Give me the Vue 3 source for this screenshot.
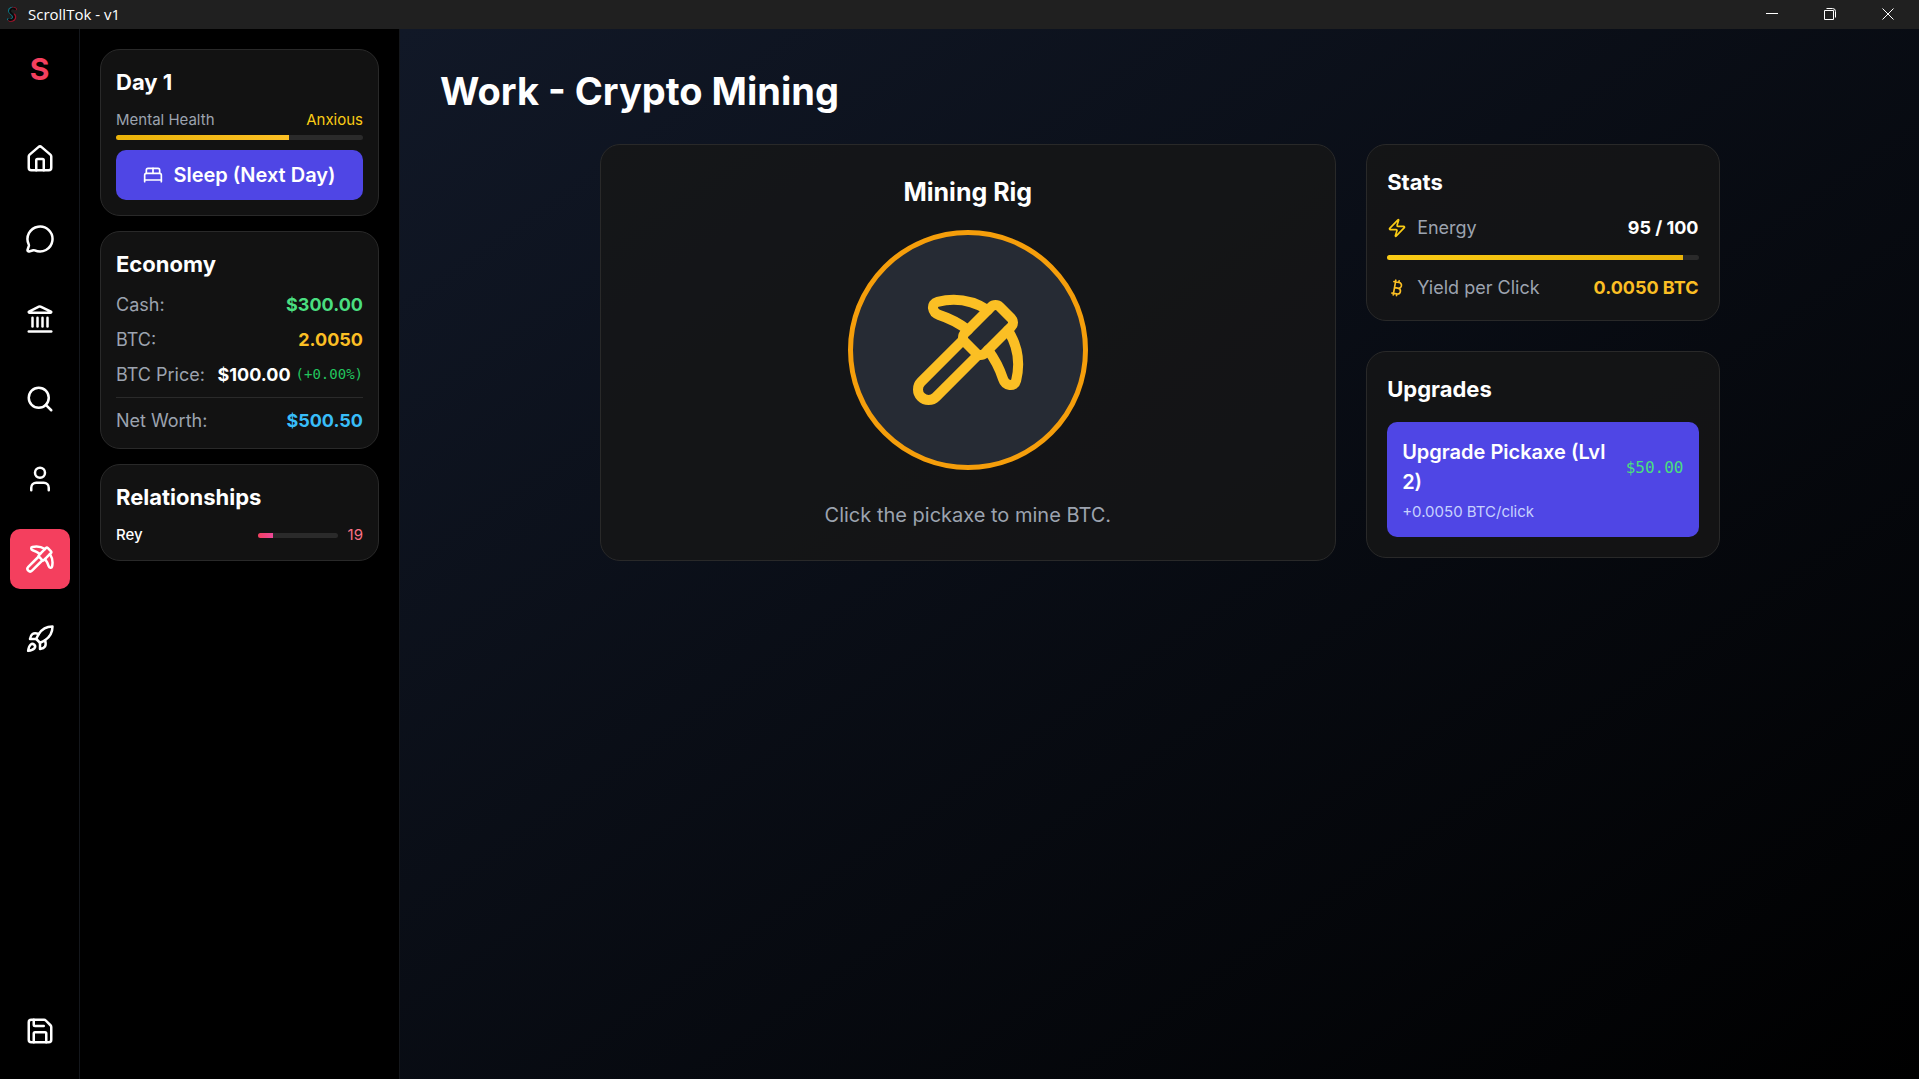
<template>
    <div class="window">
        <header class="titlebar">
            <svg class="titlebar__logo" viewBox="0 0 16 16" fill="none" stroke-width="2" stroke-linecap="round">
                <path stroke="#0e7c8c" d="M10.500 2.500C8 .8 4.800 2.500 5 5c.2 2.500 4 3 4 6 0 2.500-3 3.500-5 2.300" />
                <path stroke="#a3122a" d="M12 3.300c-.5-1-2-1.500-3.500-1M10.500 8.500c2 2.500 .5 6-2.500 6.300-1.500.1-2.500-.2-3-.6" />
                <path stroke="#0a0a0a" d="M11.200 3.200C9 1.600 6 2.700 6 5.200c0 2.300 4 3 4 5.800 0 2.500-2.800 3.600-5 2.500" />
            </svg>
            <span class="titlebar__text">ScrollTok - v1</span>
            <div class="titlebar__controls">
                <button v-for="control in windowControls" :key="control.name" :aria-label="control.name"
                    class="titlebar__button" type="button">
                    <svg viewBox="0 0 12 12" fill="none" stroke="currentColor">
                        <path v-for="d in control.paths" :key="d" :d="d" />
                    </svg>
                </button>
            </div>
        </header>

        <div class="layout">
            <nav class="nav">
                <div class="nav__logo">S</div>
                <button v-for="item in navItems" :key="item.name" @click="currentPage = item.name"
                    :class="{ 'nav__button_active': item.name === currentPage }" :aria-label="item.name"
                    class="nav__button" type="button">
                    <svg class="icon nav__icon" viewBox="0 0 24 24">
                        <path v-for="d in icons[item.icon]" :key="d" :d="d" />
                    </svg>
                </button>
                <button class="nav__button nav__button_bottom" type="button" aria-label="save">
                    <svg class="icon nav__icon" viewBox="0 0 24 24">
                        <path v-for="d in icons.save" :key="d" :d="d" />
                    </svg>
                </button>
            </nav>

            <aside class="sidebar">
                <section class="card card_small">
                    <h2 class="card__title">Day {{ day }}</h2>
                    <div class="row row_small">
                        <span class="label">Mental Health</span>
                        <span class="mood">Anxious</span>
                    </div>
                    <div class="bar bar_mental">
                        <div class="bar__fill bar__fill_mental" :style="{ width: mental + '%' }"></div>
                    </div>
                    <button @click="sleep()" class="sleep" type="button">
                        <svg class="icon sleep__icon" viewBox="0 0 24 24">
                            <path v-for="d in icons.bed" :key="d" :d="d" />
                        </svg>
                        Sleep (Next Day)
                    </button>
                </section>

                <section class="card card_small">
                    <h2 class="card__title">Economy</h2>
                    <div class="economy">
                        <div class="row">
                            <span class="label">Cash:</span>
                            <span class="value value_green">${{ cash.toFixed(2) }}</span>
                        </div>
                        <div class="row">
                            <span class="label">BTC:</span>
                            <span class="value value_amber">{{ btc.toFixed(4) }}</span>
                        </div>
                        <div class="row">
                            <span class="label">BTC Price:</span>
                            <span class="price">
                                <span class="value">${{ btcPrice.toFixed(2) }}</span>
                                <span class="price__change">(+0.00%)</span>
                            </span>
                        </div>
                        <div class="row row_total">
                            <span class="label">Net Worth:</span>
                            <span class="value value_blue">${{ netWorth.toFixed(2) }}</span>
                        </div>
                    </div>
                </section>

                <section class="card card_small">
                    <h2 class="card__title">Relationships</h2>
                    <div v-for="person in people" :key="person.name" class="row row_small">
                        <span class="person__name">{{ person.name }}</span>
                        <span class="person__level">
                            <span class="bar bar_person">
                                <span class="bar__fill bar__fill_person" :style="{ width: person.level + '%' }"></span>
                            </span>
                            {{ person.level }}
                        </span>
                    </div>
                </section>
            </aside>

            <main class="main">
                <h1 class="main__title">Work - Crypto Mining</h1>

                <div class="work">
                    <section class="card rig">
                        <h2 class="rig__title">Mining Rig</h2>
                        <button @click="mine()" class="rig__button" type="button" aria-label="mine">
                            <svg class="icon rig__icon" viewBox="0 0 24 24">
                                <path v-for="d in icons.pickaxe" :key="d" :d="d" />
                            </svg>
                        </button>
                        <p class="rig__hint">Click the pickaxe to mine BTC.</p>
                    </section>

                    <div class="work__side">
                        <section class="card card_medium">
                            <h2 class="card__title">Stats</h2>
                            <div class="row">
                                <span class="label label_icon">
                                    <svg class="icon label__icon label__icon_energy" viewBox="0 0 24 24">
                                        <path v-for="d in icons.zap" :key="d" :d="d" />
                                    </svg>
                                    Energy
                                </span>
                                <span class="value">{{ energy }} / 100</span>
                            </div>
                            <div class="bar">
                                <div class="bar__fill bar__fill_energy" :style="{ width: energy + '%' }"></div>
                            </div>
                            <div class="row">
                                <span class="label label_icon">
                                    <svg class="icon label__icon label__icon_btc" viewBox="0 0 24 24">
                                        <path v-for="d in icons.bitcoin" :key="d" :d="d" />
                                    </svg>
                                    Yield per Click
                                </span>
                                <span class="value value_amber">{{ yieldPerClick.toFixed(4) }} BTC</span>
                            </div>
                        </section>

                        <section class="card card_medium">
                            <h2 class="card__title">Upgrades</h2>
                            <button class="upgrade" type="button">
                                <span class="row">
                                    <span class="upgrade__name">Upgrade Pickaxe (Lvl 2)</span>
                                    <span class="upgrade__price">$50.00</span>
                                </span>
                                <span class="upgrade__text">+0.0050 BTC/click</span>
                            </button>
                        </section>
                    </div>
                </div>
            </main>
        </div>
    </div>
</template>

<script setup>
import { computed, ref } from 'vue'

const day = ref(1)
const mental = ref(70)
const cash = ref(300)
const btc = ref(2.005)
const btcPrice = ref(100)
const energy = ref(95)
const yieldPerClick = ref(0.005)
const currentPage = ref('work')
const people = ref([{ name: 'Rey', level: 19 }])

const netWorth = computed(() => cash.value + btc.value * btcPrice.value)

const windowControls = [
    { name: 'minimize', paths: ['M0 5.500h12'] },
    { name: 'restore', paths: ['M.5 2.500h9v9h-9z', 'M2.500 .5h6a3 3 0 0 1 3 3v6'] },
    { name: 'close', paths: ['M.5 .5l11 11', 'M11.500 .5l-11 11'] }
]

const navItems = [
    { name: 'home', icon: 'house' },
    { name: 'messages', icon: 'message' },
    { name: 'bank', icon: 'landmark' },
    { name: 'search', icon: 'search' },
    { name: 'profile', icon: 'user' },
    { name: 'work', icon: 'pickaxe' },
    { name: 'launch', icon: 'rocket' }
]

// lucide icons, 24x24
const icons = {
    house: [
        'M15 21v-8a1 1 0 0 0-1-1h-4a1 1 0 0 0-1 1v8',
        'M3 10a2 2 0 0 1 .709-1.528l7-5.999a2 2 0 0 1 2.582 0l7 5.999A2 2 0 0 1 21 10v9a2 2 0 0 1-2 2H5a2 2 0 0 1-2-2z'
    ],
    message: [
        'M2.992 16.342a2 2 0 0 1 .094 1.167l-1.065 3.290a1 1 0 0 0 1.236 1.168l3.413-.998a2 2 0 0 1 1.099.092 10 10 0 1 0-4.777-4.719'
    ],
    landmark: [
        'M10 18v-7',
        'M11.120 2.198a2 2 0 0 1 1.760.006l7.866 3.847c.476.233.310.949-.220.949H3.474c-.530 0-.695-.716-.220-.949z',
        'M14 18v-7',
        'M18 18v-7',
        'M3 22h18',
        'M6 18v-7'
    ],
    search: [
        'm21 21-4.340-4.340',
        'M19 11a8 8 0 1 1-16 0 8 8 0 0 1 16 0z'
    ],
    user: [
        'M19 21v-2a4 4 0 0 0-4-4H9a4 4 0 0 0-4 4v2',
        'M16 7a4 4 0 1 1-8 0 4 4 0 0 1 8 0z'
    ],
    pickaxe: [
        'm14 13-8.381 8.380a1 1 0 0 1-3.001-3L11 9.999',
        'M15.973 4.027A13 13 0 0 0 5.902 2.373c-1.398.342-1.092 2.158.277 2.601a19.900 19.900 0 0 1 5.822 3.024',
        'M16.001 11.999a19.900 19.900 0 0 1 3.024 5.824c.444 1.369 2.260 1.676 2.603.278A13 13 0 0 0 20 8.069',
        'M18.352 3.352a1.205 1.205 0 0 0-1.704 0l-5.296 5.296a1.205 1.205 0 0 0 0 1.704l2.296 2.296a1.205 1.205 0 0 0 1.704 0l5.296-5.296a1.205 1.205 0 0 0 0-1.704z'
    ],
    rocket: [
        'M4.500 16.500c-1.500 1.260-2 5-2 5s3.740-.5 5-2c.710-.840.700-2.130-.090-2.910a2.180 2.180 0 0 0-2.910-.090z',
        'm12 15-3-3a22 22 0 0 1 2-3.950A12.880 12.880 0 0 1 22 2c0 2.720-.780 7.500-6 11a22.350 22.350 0 0 1-4 2z',
        'M9 12H4s.550-3.030 2-4c1.620-1.080 5 0 5 0',
        'M12 15v5s3.030-.550 4-2c1.080-1.620 0-5 0-5'
    ],
    save: [
        'M15.200 3a2 2 0 0 1 1.400.6l3.800 3.800a2 2 0 0 1 .6 1.400V19a2 2 0 0 1-2 2H5a2 2 0 0 1-2-2V5a2 2 0 0 1 2-2z',
        'M17 21v-7a1 1 0 0 0-1-1H8a1 1 0 0 0-1 1v7',
        'M7 3v4a1 1 0 0 0 1 1h7'
    ],
    bed: [
        'M2 20v-8a2 2 0 0 1 2-2h16a2 2 0 0 1 2 2v8',
        'M4 10V6a2 2 0 0 1 2-2h12a2 2 0 0 1 2 2v4',
        'M12 4v6',
        'M2 18h20'
    ],
    zap: [
        'M4 14a1 1 0 0 1-.780-1.630l9.900-10.200a.5.5 0 0 1 .860.460l-1.920 6.020A1 1 0 0 0 13 10h7a1 1 0 0 1 .780 1.630l-9.900 10.200a.5.5 0 0 1-.860-.460l1.920-6.020A1 1 0 0 0 11 14z'
    ],
    bitcoin: [
        'M11.767 19.089c4.924.868 6.140-6.025 1.216-6.894m-1.216 6.894L5.860 18.047m5.908 1.042-.347 1.970m1.563-8.864c4.924.869 6.140-6.025 1.215-6.893m-1.215 6.893-3.940-.694m5.155-6.200L8.290 4.260m5.908 1.042.348-1.970M7.480 20.364l3.126-17.727'
    ]
}

function sleep() {
    day.value++;
    energy.value = 100;
}

function mine() {
    if (energy.value <= 0) return;
    energy.value--;
    btc.value += yieldPerClick.value;
}
</script>

<style>
body {
    margin: 0;
    background-color: #000;
}
</style>

<style scoped>
.window {
    display: flex;
    flex-direction: column;
    min-height: 100vh;
    font-family: Inter, "Liberation Sans", sans-serif;
    font-size: 18px;
    line-height: 25px;
    color: #fff;
}

h1,
h2,
p {
    margin: 0;
}

button {
    border: 0;
    padding: 0;
    background: none;
    color: inherit;
    font: inherit;
    cursor: pointer;
}

.titlebar {
    display: flex;
    align-items: center;
    box-sizing: border-box;
    height: 29px;
    padding: 0 2px 1px 4px;
    background-color: #202020;
}

.titlebar__logo {
    width: 16px;
    height: 16px;
    margin-right: 8px;
}

.titlebar__text {
    font-family: "Open Sans", "Noto Sans", sans-serif;
    font-size: 15px;
}

.titlebar__controls {
    display: flex;
    height: 100%;
    margin-left: auto;
}

.titlebar__button {
    display: flex;
    align-items: center;
    justify-content: center;
    width: 58px;
}

.titlebar__button svg {
    width: 12px;
    height: 12px;
}

.layout {
    display: flex;
    flex: 1;
}

.icon {
    display: block;
    flex-shrink: 0;
    fill: none;
    stroke: currentColor;
    stroke-width: 2;
    stroke-linecap: round;
    stroke-linejoin: round;
}

.nav {
    display: flex;
    flex-direction: column;
    align-items: center;
    gap: 20px;
    box-sizing: border-box;
    width: 80px;
    padding: 20px 0 18px;
    border-right: 1px solid #14171c;
    background-color: #000;
}

.nav__logo {
    margin-bottom: 20px;
    font-size: 30px;
    font-weight: 700;
    line-height: 40px;
    color: #f43f5e;
}

.nav__button {
    display: flex;
    align-items: center;
    justify-content: center;
    width: 60px;
    height: 60px;
    border-radius: 10px;
}

.nav__button_active {
    background-color: #f43f5e;
}

.nav__button_bottom {
    margin-top: auto;
}

.nav__icon {
    width: 30px;
    height: 30px;
}

.sidebar {
    display: flex;
    flex-direction: column;
    gap: 15px;
    box-sizing: border-box;
    width: 320px;
    padding: 20px;
    border-right: 1px solid #14171c;
    background-color: #000;
}

.card {
    border: 1px solid #292929;
    border-radius: 20px;
    background-color: rgba(23, 23, 23, 0.8);
}

.card_small {
    padding: 15px;
}

.card_medium {
    display: flex;
    flex-direction: column;
    gap: 15px;
    padding: 20px;
}

.card__title {
    font-size: 22px;
    font-weight: 700;
    line-height: 35px;
}

.card_small .card__title {
    margin-bottom: 10px;
}

.row {
    display: flex;
    align-items: center;
    justify-content: space-between;
}

.row_small {
    font-size: 15px;
    line-height: 20px;
}

.label {
    color: #9ca3af;
}

.label_icon {
    display: flex;
    align-items: center;
    gap: 10px;
}

.label__icon {
    width: 20px;
    height: 20px;
}

.label__icon_energy {
    color: #facc15;
}

.label__icon_btc {
    color: #fbbf24;
}

.value {
    font-weight: 700;
}

.value_green {
    color: #4ade80;
}

.value_amber {
    color: #fbbf24;
}

.value_blue {
    color: #38bdf8;
}

.mood {
    color: #facc15;
}

.bar {
    display: block;
    height: 5px;
    border-radius: 5px;
    background-color: #2a2a2a;
    overflow: hidden;
}

.bar_mental {
    margin: 5px 0 10px;
}

.bar_person {
    width: 80px;
}

.bar__fill {
    display: block;
    height: 100%;
}

.bar__fill_mental {
    background: linear-gradient(to right, #eab308, #fbbf24);
}

.bar__fill_energy {
    background: linear-gradient(to right, #facc15, #eab308);
}

.bar__fill_person {
    background: linear-gradient(to right, #f43f5e, #ec4899);
}

.sleep {
    display: flex;
    align-items: center;
    justify-content: center;
    gap: 10px;
    width: 100%;
    height: 50px;
    border-radius: 10px;
    background-color: #4f46e5;
    font-size: 20px;
    font-weight: 600;
}

.sleep__icon {
    width: 20px;
    height: 20px;
}

.economy {
    display: flex;
    flex-direction: column;
    gap: 10px;
}

.row_total {
    padding-top: 10px;
    border-top: 1px solid #2a2a2a;
}

.price {
    display: flex;
    align-items: center;
    gap: 5px;
}

.price__change {
    font-family: "DejaVu Sans Mono", "Liberation Mono", monospace;
    font-size: 14px;
    color: #22c55e;
}

.person__name {
    font-weight: 500;
}

.person__level {
    display: flex;
    align-items: center;
    gap: 10px;
    color: #fb7185;
}

.main {
    flex: 1;
    padding: 40px;
    background: linear-gradient(to bottom right, #111827, #000);
}

.main__title {
    margin-bottom: 30px;
    font-size: 38px;
    font-weight: 700;
    line-height: 45px;
}

.work {
    display: grid;
    grid-template-columns: repeat(3, 1fr);
    align-items: start;
    gap: 30px;
    max-width: 1120px;
    margin: 0 auto;
}

.work__side {
    display: flex;
    flex-direction: column;
    gap: 30px;
}

.rig {
    display: flex;
    flex-direction: column;
    align-items: center;
    grid-column: span 2;
    padding: 30px;
}

.rig__title {
    margin-bottom: 20px;
    font-size: 25px;
    font-weight: 700;
    line-height: 35px;
}

.rig__button {
    display: flex;
    align-items: center;
    justify-content: center;
    box-sizing: border-box;
    width: 240px;
    height: 240px;
    border: 5px solid #f59e0b;
    border-radius: 50%;
    background-color: rgba(55, 65, 81, 0.5);
}

.rig__icon {
    width: 120px;
    height: 120px;
    color: #fbbf24;
}

.rig__hint {
    margin-top: 30px;
    font-size: 20px;
    line-height: 30px;
    color: #9ca3af;
}

.upgrade {
    display: flex;
    flex-direction: column;
    gap: 5px;
    padding: 15px;
    border-radius: 10px;
    background-color: #4f46e5;
    text-align: left;
}

.upgrade__name {
    font-size: 20px;
    font-weight: 600;
    line-height: 30px;
}

.upgrade__text {
    font-size: 15px;
    line-height: 20px;
    color: #c7d2fe;
}

.upgrade__price {
    font-family: "DejaVu Sans Mono", "Liberation Mono", monospace;
    font-size: 16px;
    color: #4ade80;
}
</style>
